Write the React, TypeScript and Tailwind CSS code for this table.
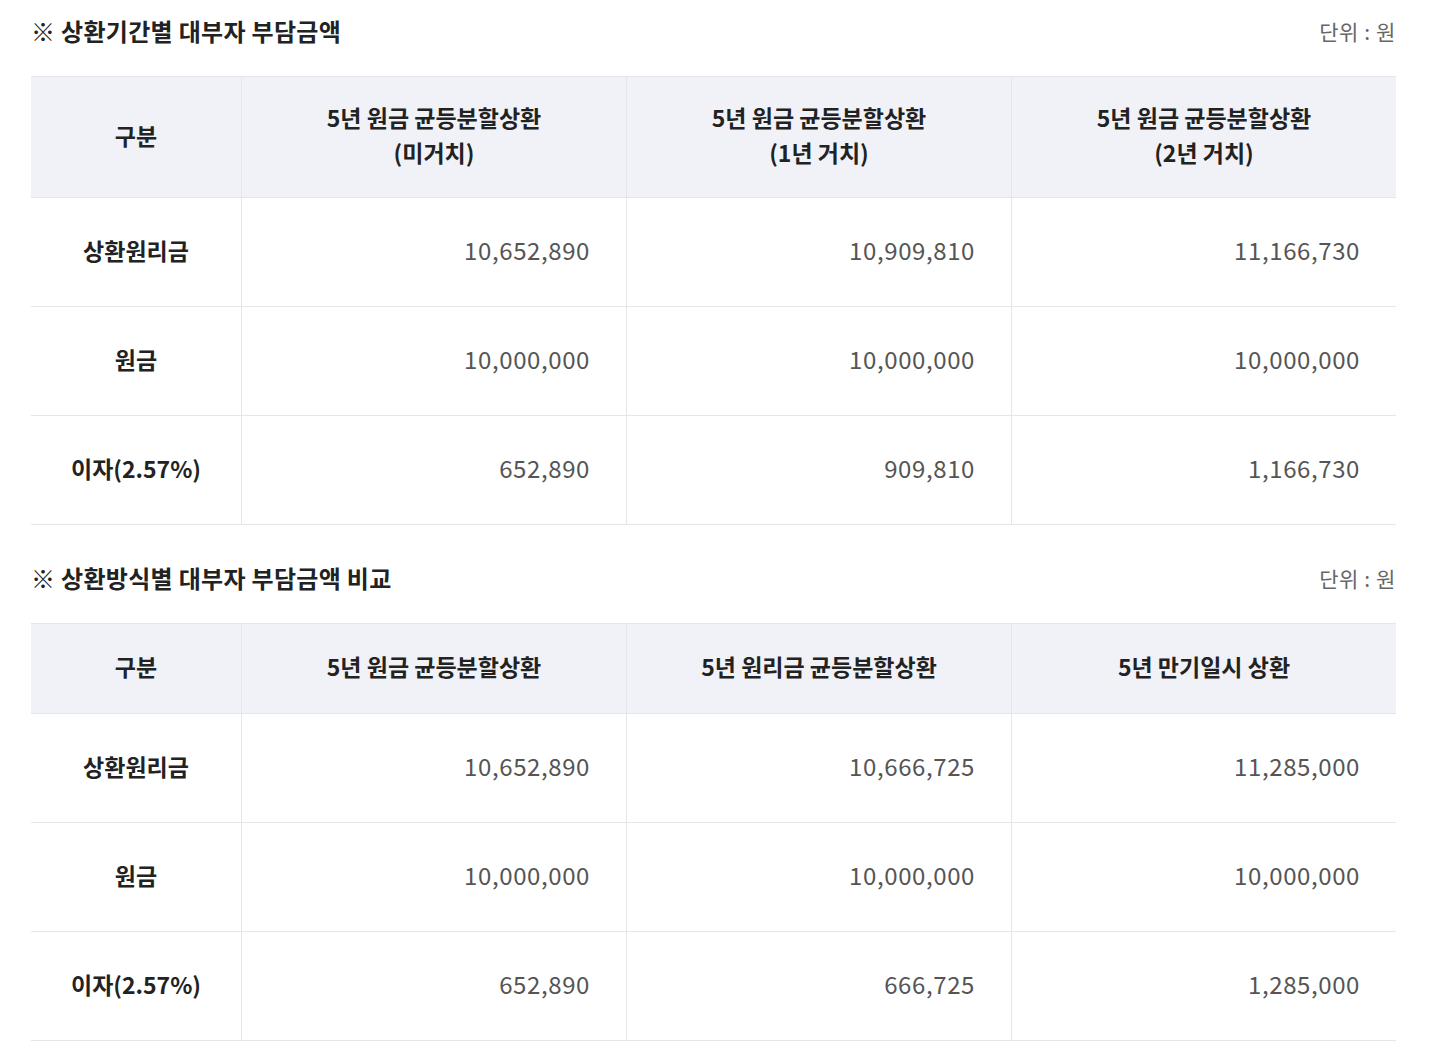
type Table = {
  title: string;
  headers: string[][];
  headerHeight: string;
  rows: { label: string; values: string[] }[];
};

const tables: Table[] = [
  {
    title: '※ 상환기간별 대부자 부담금액',
    headers: [
      ['5년 원금 균등분할상환', '(미거치)'],
      ['5년 원금 균등분할상환', '(1년 거치)'],
      ['5년 원금 균등분할상환', '(2년 거치)'],
    ],
    headerHeight: 'h-[121px]',
    rows: [
      { label: '상환원리금', values: ['10,652,890', '10,909,810', '11,166,730'] },
      { label: '원금', values: ['10,000,000', '10,000,000', '10,000,000'] },
      { label: '이자(2.57%)', values: ['652,890', '909,810', '1,166,730'] },
    ],
  },
  {
    title: '※ 상환방식별 대부자 부담금액 비교',
    headers: [['5년 원금 균등분할상환'], ['5년 원리금 균등분할상환'], ['5년 만기일시 상환']],
    headerHeight: 'h-[90px]',
    rows: [
      { label: '상환원리금', values: ['10,652,890', '10,666,725', '11,285,000'] },
      { label: '원금', values: ['10,000,000', '10,000,000', '10,000,000'] },
      { label: '이자(2.57%)', values: ['652,890', '666,725', '1,285,000'] },
    ],
  },
];

function CostTable({ table, top }: { table: Table; top: string }) {
  return (
    <section className={top}>
      <div className="flex items-end justify-between h-[44px] pb-[2px]">
        <h2 className="text-[24px] font-bold text-[#222] leading-[42px] tracking-[0.3px]">{table.title}</h2>
        <span className="text-[21px] text-[#666] leading-[42px] tracking-[0.6px]">단위&nbsp;:&nbsp;원</span>
      </div>
      <div className="mt-[22px] grid grid-cols-[210px_1fr_1fr_1fr] border-t border-[#e4e6ea]">
        <div className={`${table.headerHeight} bg-[#f1f2f7] border-b border-[#e4e6ea] flex items-center justify-center pb-[4px] text-[23px] font-bold text-[#222]`}>
          구분
        </div>
        {table.headers.map((h, i) => (
          <div
            key={i}
            className={`${table.headerHeight} bg-[#f1f2f7] border-b border-l border-[#e4e6ea] flex flex-col items-center justify-center pb-[4px] text-[23px] font-bold text-[#222] leading-[35px]`}
          >
            {h.map((line) => (
              <span key={line}>{line}</span>
            ))}
          </div>
        ))}
        {table.rows.map((r) => (
          <div key={r.label} className="contents">
            <div className="h-[109px] border-b border-[#e4e6ea] flex items-center justify-center pb-[4px] text-[23px] font-bold text-[#222]">
              {r.label}
            </div>
            {r.values.map((v, i) => (
              <div
                key={i}
                className="h-[109px] border-b border-l border-[#e4e6ea] flex items-center justify-end pr-[36px] pb-[4px] text-[24px] text-[#555] tracking-[0.6px]"
              >
                {v}
              </div>
            ))}
          </div>
        ))}
      </div>
    </section>
  );
}

export default function App() {
  return (
    <div
      className="w-[1443px] bg-white px-[31px] pt-[10px] pb-[20px] antialiased"
      style={{ fontFamily: '"Noto Sans CJK KR", "Noto Sans", sans-serif' }}
    >
      <div className="w-[1365px]">
        {tables.map((t, i) => (
          <CostTable key={t.title} table={t} top={i === 0 ? '' : 'mt-[32px]'} />
        ))}
      </div>
    </div>
  );
}
